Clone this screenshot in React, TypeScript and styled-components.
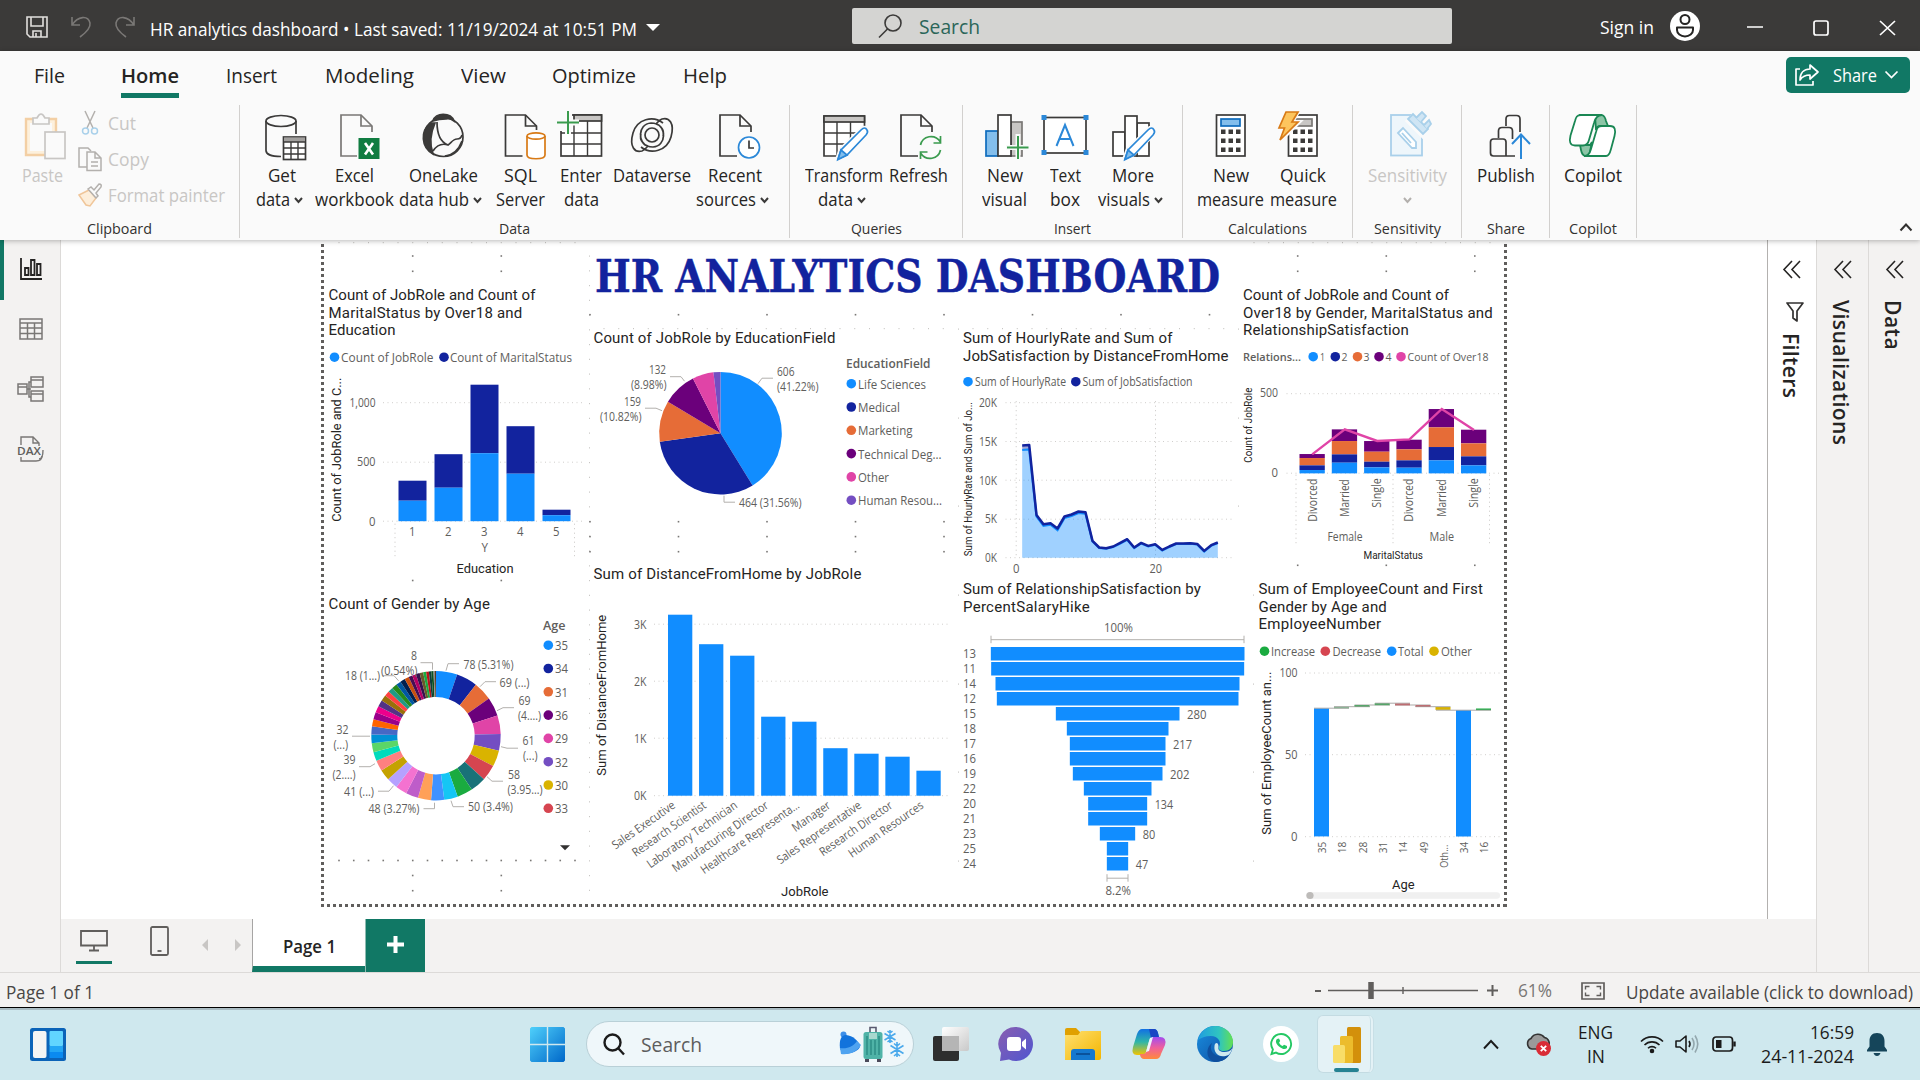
import React, { useLayoutEffect, useRef, useState } from 'react';
import styled, { createGlobalStyle, css } from 'styled-components';

const UI = `'Open Sans', 'Noto Sans', sans-serif`;
const DIN = `Roboto, 'Open Sans', sans-serif`;
const GREEN = '#117865';
const INK = '#3b3a39';

const Global = createGlobalStyle`
  *, *::before, *::after { box-sizing: border-box; }
  body { margin: 0; background: #fff; font-family: ${UI}; overflow: hidden; }
`;

/* ---------- text that fills an exact width ---------- */
const FitBox = styled.span<{ $w: number }>`
  display: block;
  flex: none;
  width: ${(p) => p.$w}px;
  text-align: left;
`;
const FitInner = styled.span`
  display: inline-block;
  white-space: pre;
  transform-origin: 0 50%;
`;
function Fit({ w, children, spaced = false }: { w: number; children: string; spaced?: boolean }) {
  const ref = useRef<HTMLSpanElement>(null);
  const [natural, setNatural] = useState(0);
  useLayoutEffect(() => {
    if (ref.current) setNatural(ref.current.getBoundingClientRect().width);
  }, []);
  const style: React.CSSProperties = !natural
    ? {}
    : spaced
      ? { letterSpacing: (w - natural) / children.length }
      : { transform: `scaleX(${w / natural})` };
  return (
    <FitBox $w={w}>
      <FitInner ref={ref} style={style}>
        {children}
      </FitInner>
    </FitBox>
  );
}

/* ---------- shell ---------- */
const Screen = styled.div`
  width: 1920px;
  height: 1080px;
  display: flex;
  flex-direction: column;
  overflow: hidden;
  background: #fff;
  color: #252423;
`;
const Svg = styled.svg<{ $w: number; $h: number; $ml?: number; $mt?: number }>`
  display: block;
  flex: none;
  width: ${(p) => p.$w}px;
  height: ${(p) => p.$h}px;
  margin-left: ${(p) => p.$ml ?? 0}px;
  margin-top: ${(p) => p.$mt ?? 0}px;
  overflow: visible;
`;

/* ---------- title bar ---------- */
const TitleBar = styled.header`
  height: 51px;
  flex: none;
  display: flex;
  align-items: flex-start;
  background: #3b3a39;
  color: #fff;
  font-size: 18px;
  line-height: 24px;
`;
const DocName = styled.div`
  margin: 17px 0 0 15px;
`;
const SearchBox = styled.div`
  width: 600px;
  height: 36px;
  margin: 8px 0 0 192px;
  display: flex;
  align-items: center;
  background: #d4d4d2;
  border-radius: 2px;
  color: #2b6659;
  font-size: 20px;
`;
const SearchWord = styled.div`
  margin: 2px 0 0 17px;
`;
const SignIn = styled.div`
  margin: 15px 0 0 148px;
`;

/* ---------- ribbon ---------- */
const Ribbon = styled.div`
  height: 189px;
  flex: none;
  background: #fafafa;
  position: relative;
  z-index: 3;
  box-shadow: 0 1px 5px rgba(0, 0, 0, 0.28);
`;
const Tabs = styled.nav`
  height: 54px;
  display: flex;
  align-items: flex-start;
  font-size: 20px;
  line-height: 28px;
`;
const Tab = styled.div<{ $ml: number; $on?: boolean }>`
  margin: 11px 0 0 ${(p) => p.$ml}px;
  height: 36px;
  ${(p) => p.$on && css`font-weight: 600; border-bottom: 5px solid ${GREEN};`}
`;
const ShareButton = styled.div`
  width: 124px;
  height: 36px;
  margin: 6px 0 0 1059px;
  display: flex;
  align-items: center;
  border-radius: 5px;
  background: ${GREEN};
  color: #fff;
  font-size: 18px;
`;
const ShareWord = styled.div`
  margin-left: 14px;
`;
const Groups = styled.div`
  display: flex;
  height: 133px;
`;
const Group = styled.section<{ $w: number }>`
  width: ${(p) => p.$w}px;
  height: 133px;
  flex: none;
  display: flex;
  flex-direction: column;
  border-right: 1px solid #d2d0ce;
`;
const GroupBody = styled.div<{ $pl: number }>`
  height: 113px;
  padding: 6px 0 0 ${(p) => p.$pl}px;
  display: flex;
  align-items: flex-start;
`;
const GroupName = styled.div`
  font-size: 15px;
  line-height: 20px;
  display: flex;
  justify-content: center;
  margin-top: 1px;
  color: #323130;
`;
const BigButton = styled.div<{ $w: number; $off?: boolean }>`
  width: ${(p) => p.$w}px;
  flex: none;
  display: flex;
  flex-direction: column;
  align-items: center;
  font-size: 17.5px;
  line-height: 24px;
  color: ${(p) => (p.$off ? '#c8c6c4' : '#252423')};
`;
const BigLabel = styled.div`
  margin-top: 2px;
  display: flex;
  flex-direction: column;
  align-items: center;
`;
const LabelLine = styled.div<{ $shift?: boolean }>`
  display: flex;
  align-items: center;
  gap: 4px;
  height: 24px;
  padding-right: ${(p) => (p.$shift ? 5 : 0)}px;
`;
const ClipList = styled.div`
  margin-left: 8px;
  display: flex;
  flex-direction: column;
  gap: 12px;
`;
const ClipItem = styled.div`
  height: 24px;
  display: flex;
  align-items: center;
  gap: 6px;
  font-size: 17.5px;
  color: #c8c6c4;
`;
const Collapse = styled.div`
  margin: 118px 0 0 263px;
`;

const Chev = ({ c = INK, s = 2 }: { c?: string; s?: number }) => (
  <Svg $w={9} $h={7} $mt={3} viewBox="0 0 9 7" fill="none" stroke={c} strokeWidth={s}>
    <path d="M1 1l3.5 4L8 1" />
  </Svg>
);

type Line = [string, number, boolean?];
function Big({ w, icon, lines, off }: { w: number; icon: React.ReactNode; lines: Line[]; off?: boolean }) {
  return (
    <BigButton $w={w} $off={off}>
      <Svg $w={50} $h={50} viewBox="0 0 50 50" fill="none" stroke={INK} strokeWidth={1.7}>
        {icon}
      </Svg>
      <BigLabel>
        {lines.map(([t, lw, chev], i) => (
          <LabelLine key={i} $shift={!!t && !!chev}>
            {t && <Fit w={lw}>{t}</Fit>}
            {chev && <Chev c={off ? '#b3b0ad' : INK} />}
          </LabelLine>
        ))}
      </BigLabel>
    </BigButton>
  );
}

const Page = ({ x, grey }: { x: number; grey?: boolean }) => (
  <g stroke={grey ? '#797775' : INK}>
    <path d={`M${x + 19} 45.5H${x}V4h20l11 11v9`} fill="#fafafa" stroke="none" />
    <path d={`M${x + 17} 45H${x}V4h20l11 11v6`} />
    <path d={`M${x + 20} 4v11h11`} />
  </g>
);
const Pencil = ({ dx = 0 }: { dx?: number }) => (
  <g transform={`translate(${dx} 0)`}>
    <path d="M44 17.5q4-1 4.500 4L27 43l-8.500 5.500L22 39z" fill="#fff" stroke="#fafafa" strokeWidth={5} />
    <path d="M42 19q4-4 6 0 1.500 2-1 5L28 44l-9 4 3-9z" fill="#fff" stroke="#2b88d8" />
    <path d="M22 39l6 5-9 4.500z" fill="#83beec" stroke="#2b88d8" />
  </g>
);
const Calc = ({ grey }: { grey?: boolean }) => (
  <g>
    <rect x={10.5} y={4} width={28.5} height={41} fill="#fff" />
    <rect x={15} y={8} width={19} height={7} fill={grey ? '#c8c6c4' : '#83beec'} stroke={grey ? '#797775' : '#0f6cbd'} />
    {[20, 29, 38].map((y) =>
      [15, 22.5, 30].map((x) => <rect key={`${x}${y}`} x={x} y={y - 1.5} width={4.5} height={4.5} fill={INK} stroke="none" />),
    )}
  </g>
);

const icons = {
  getData: (
    <>
      <path d="M24 45.5C14 45.5 9 43 9 39.500V10" />
      <path d="M39 10v13" />
      <ellipse cx={24} cy={10} rx={15} ry={5.5} />
      <rect x={26.5} y={26} width={22} height={22.5} fill="#fff" />
      <rect x={27} y={26.5} width={21} height={4.5} fill="#a19f9d" stroke="none" />
      <path d="M26.5 31h22M26.5 37h22M26.5 43h22M34 31v17.500M41 31v17.500" strokeWidth={1.4} />
    </>
  ),
  excel: (
    <>
      <Page x={11} grey />
      <rect x={27} y={25.5} width={24} height={24} fill="#fafafa" stroke="none" />
      <rect x={28.5} y={27} width={21} height={21} fill="#107c41" stroke="none" />
      <path d="M35 32l8 11.500M43 32l-8 11.500" stroke="#fff" strokeWidth={2.6} />
    </>
  ),
  onelake: (
    <>
      <circle cx={25.5} cy={26} r={19.5} />
      <path d="M15 10C17 1 33 1 36 10q-4-3-8-2-7 0-13 2z" fill={INK} />
      <path d="M13 12C2 20 3 36 15 43 11 32 13 21 17 12z" fill={INK} />
      <path d="M19 11c0 12 3 20 11 23 3-2 5-6 9-6q4 0 5-4M15 40c4-6 9-8 15-6M44 30c-3 8-8 14-17 15" />
    </>
  ),
  sql: (
    <>
      <Page x={9.5} />
      <rect x={28.5} y={19} width={23} height={31} fill="#fafafa" stroke="none" />
      <g stroke="#d87a16" fill="#fff">
        <path d="M31 25v19c0 5 18 5 18 0V25" />
        <ellipse cx={40} cy={25} rx={9} ry={3.2} />
      </g>
    </>
  ),
  enter: (
    <>
      <rect x={5} y={4} width={40.5} height={41} fill="#fff" />
      <rect x={18} y={4} width={27.5} height={6} fill="#c8c6c4" />
      <path d="M5 22h40M5 33h40M18 10v35M31.5 10v35" strokeWidth={1.4} />
      <rect x={0} y={0} width={16} height={20} fill="#fafafa" stroke="none" />
      <path d="M12 0v23M1 11.500h22" stroke="#fafafa" strokeWidth={6} />
      <path d="M12 0v23M1 11.500h22" stroke="#3a9b4e" strokeWidth={2} />
    </>
  ),
  dataverse: (
    <>
      <circle cx={25} cy={24} r={7} />
      <path d="M36 12C26 4 10 8 6 22c-4 14 2 20 9 18 3-1 4-3 6-5M14 36c10 8 26 4 30-10 4-14-2-20-9-18-3 1-4 3-6 5" />
      <path d="M29 13C39 15 40 35 26 36c-9 0-14-7-12-13M21 35C11 33 10 13 24 12c9 0 14 7 12 13" />
    </>
  ),
  recent: (
    <>
      <Page x={10} />
      <circle cx={39} cy={36.5} r={13} fill="#fafafa" stroke="none" />
      <circle cx={39} cy={36.5} r={10.5} fill="#fff" stroke="#2b88d8" />
      <path d="M39 29.5v7.500h5" stroke={INK} />
    </>
  ),
  transform: (
    <>
      <path d="M45.5 18V5H5v40h20" fill="#fff" />
      <rect x={5} y={5} width={40.5} height={6} fill="#c8c6c4" />
      <path d="M5 22h34M5 33h22M18 11v34M31.5 11v20" strokeWidth={1.4} />
      <Pencil />
    </>
  ),
  refresh: (
    <>
      <Page x={8} />
      <circle cx={37.5} cy={36.5} r={13} fill="#fafafa" stroke="none" />
      <g stroke="#3a9b4e">
        <path d="M27.5 34c2-9 14-12 20-3M47.5 25v7h-7M47.5 39c-2 9-14 12-20 3M27.5 48v-7h7" />
      </g>
    </>
  ),
  newVisual: (
    <>
      <rect x={31} y={11} width={11} height={34} fill="#c8c6c4" stroke="#797775" />
      <rect x={6} y={20} width={12} height={25} fill="#83beec" stroke="#0f6cbd" />
      <rect x={18} y={4} width={13} height={41} fill="#fff" />
      <path d="M38 23v25M26 36.500h23" stroke="#fafafa" strokeWidth={5} />
      <path d="M38 25v23M27 36.500h21.500" stroke="#3a9b4e" strokeWidth={2} />
    </>
  ),
  textBox: (
    <>
      <rect x={4} y={6.5} width={42} height={35.5} fill="#fff" />
      <g fill="#2b88d8" stroke="none">
        <rect x={1.5} y={4} width={5} height={5} />
        <rect x={43.5} y={4} width={5} height={5} />
        <rect x={1.5} y={39} width={5} height={5} />
        <rect x={43.5} y={39} width={5} height={5} />
      </g>
      <path d="M16.5 35L25 14l8.500 21M19.5 28h11" stroke="#2b88d8" strokeWidth={2} />
    </>
  ),
  moreVisuals: (
    <>
      <rect x={29} y={12} width={12} height={33} fill="#fff" />
      <rect x={5} y={21} width={12} height={24} fill="#fff" />
      <rect x={17} y={5} width={12} height={40} fill="#fff" />
      <Pencil dx={-2} />
    </>
  ),
  quick: (
    <>
      <Calc grey />
      <path d="M8 1h12l-6 10h7L2 30l4.500-13H0z" fill="#fafafa" stroke="#fafafa" strokeWidth={4} />
      <path d="M8 1h12l-6 10h6L2 29l4.500-12H1z" fill="#fdc55e" stroke="#d87a16" />
    </>
  ),
  sensitivity: (
    <g stroke="#a9d0ea" strokeWidth={1.8}>
      <rect x={9} y={4} width={31} height={40.5} fill="#eef6fb" />
      <path d="M27 10l6-6 15 15-6 6z" fill="#fafafa" stroke="#fafafa" strokeWidth={6} />
      <path d="M26 8l5-5 15 15-5 5z" fill="#cfe5f4" />
      <path d="M34 7l6-6 4 4-5 6M42 14l5-5 2 4-4 5" fill="#cfe5f4" />
      <path d="M16 22l5-5 13 14v6h-4z" fill="#fff" />
      <path d="M20 22l9 10" />
    </g>
  ),
  publish: (
    <>
      <path d="M25 15V8q0-3.500 3.500-3.500h7Q39 4.500 39 8v13" />
      <path d="M17.5 27V20q0-3.500 3.500-3.500h7q3.500 0 3.500 3.500v8" />
      <path d="M34 45H12.500q-3 0-3-3V31q0-3 3-3H22q3 0 3 3v14" />
      <path d="M40 48V25M31 33l9-9.500 9 9.500" stroke="#2b88d8" strokeWidth={2} />
    </>
  ),
  copilot: (
    <g stroke="#1a8754" strokeWidth={1.8} transform="translate(-1 0)">
      <path d="M28 4h7q3 1 4 6l2 5h-8q-3 0-4 4z" fill="#8cc5a6" />
      <path d="M13 34h10l2-3-3 14h-4q-3-1-4-6z" fill="#8cc5a6" />
      <path d="M12 4h23c-5 0-7 4-8 8l-5 17c-1 4-3 5.500-6 5.500H8c-5 0-6-4-4.500-10L8 10c1-4 2-6 6-6z" fill="#fff" />
      <path d="M39 45H17c4 0 6-3 7-7l5-17c1-4 2-6 6-6h8c5 0 6 4 4.500 10L44 38c-1 4-2 7-5 7z" fill="#fff" />
    </g>
  ),
};

function RibbonGroup({ w, pl, name, nameW, children }: { w: number; pl: number; name: string; nameW: number; children: React.ReactNode }) {
  return (
    <Group $w={w}>
      <GroupBody $pl={pl}>{children}</GroupBody>
      <GroupName>
        <Fit w={nameW}>{name}</Fit>
      </GroupName>
    </Group>
  );
}

/* ---------- body ---------- */
const Body = styled.main`
  height: 732px;
  flex: none;
  display: flex;
`;
const NavRail = styled.aside`
  width: 61px;
  flex: none;
  background: #f3f2f1;
  border-right: 1px solid #dcdad8;
  display: flex;
  flex-direction: column;
`;
const NavItem = styled.div<{ $on?: boolean }>`
  height: 60px;
  display: flex;
  align-items: center;
  justify-content: center;
  border-left: 4px solid ${(p) => (p.$on ? GREEN : 'transparent')};
  padding: 0 3px 2px 0;
`;
const Center = styled.div`
  width: 1755px;
  flex: none;
  display: flex;
  flex-direction: column;
`;
const Work = styled.div`
  height: 679px;
  display: flex;
`;
const Canvas = styled.div`
  width: 1706px;
  height: 679px;
  flex: none;
  position: relative;
  overflow: hidden;
  background: #fff;
`;
const FilterPane = styled.div`
  width: 49px;
  flex: none;
  border-left: 1px solid #b3b1af;
  display: flex;
  flex-direction: column;
  align-items: center;
  padding-top: 20px;
`;
const SidePane = styled.div<{ $w: number }>`
  width: ${(p) => p.$w}px;
  flex: none;
  background: #f3f2f1;
  border-left: 1px solid #dcdad8;
  display: flex;
  flex-direction: column;
  align-items: center;
  padding-top: 20px;
`;
const VText = styled.div<{ $mt: number; $sp?: number }>`
  writing-mode: vertical-rl;
  margin-top: ${(p) => p.$mt}px;
  margin-right: 3px;
  font-size: 21px;
  line-height: 26px;
  font-weight: 600;
  letter-spacing: ${(p) => p.$sp ?? 0}px;
`;
const Dbl = () => (
  <Svg $w={18} $h={19} viewBox="0 0 18 19" fill="none" stroke="#252423" strokeWidth={1.6}>
    <path d="M9 1L1 9.500 9 18M17 1L9 9.500l8 8.500" />
  </Svg>
);

/* report page */
const DotBorder = styled.div<{ $l: number; $t: number; $w: number; $h: number; $v?: boolean }>`
  position: absolute;
  left: ${(p) => p.$l}px;
  top: ${(p) => p.$t}px;
  width: ${(p) => p.$w}px;
  height: ${(p) => p.$h}px;
  background: repeating-linear-gradient(${(p) => (p.$v ? 'to bottom' : 'to right')}, #605e5c 0 3px, transparent 3px 6px);
`;
const GridLayer = styled.svg`
  position: absolute;
  left: 0;
  top: 0;
  width: 1706px;
  height: 679px;
`;
const ReportTitle = styled.h1`
  position: absolute;
  left: 534px;
  top: 11px;
  margin: 0;
  font: bold 44.5px/50px 'DejaVu Serif Condensed', 'DejaVu Serif', serif;
  color: #12239e;
  -webkit-text-stroke: 0.4px #12239e;
`;
const VisualBox = styled.article<{ $x: number; $y: number; $w: number; $h: number }>`
  position: absolute;
  left: ${(p) => p.$x - 61}px;
  top: ${(p) => p.$y - 240}px;
  width: ${(p) => p.$w}px;
  height: ${(p) => p.$h}px;
  display: flex;
  flex-direction: column;
`;
const VisualTitle = styled.div`
  flex: none;
  font-family: ${DIN};
  font-size: 15px;
  line-height: 17.5px;
  color: #252423;
`;
const Plot = styled.svg`
  display: block;
  flex: none;
  overflow: visible;
  font-family: ${UI};
  font-size: 12px;
  fill: #605e5c;
`;

function Visual({ x, y, w, h, title, children }: { x: number; y: number; w: number; h: number; title: [string, number][]; children: React.ReactNode }) {
  const used = title.length * 17.5;
  return (
    <VisualBox $x={x - 0.5} $y={y + 1} $w={w} $h={h}>
      <VisualTitle>
        {title.map(([t, tw]) => (
          <Fit key={t} w={tw} spaced>
            {t}
          </Fit>
        ))}
      </VisualTitle>
      <Plot width={w} height={h - used} viewBox={`${x} ${y + used + 1.8} ${w} ${h - used}`}>
        {children}
      </Plot>
    </VisualBox>
  );
}

type TProps = { x: number; y: number; w: number; s?: number; din?: boolean; b?: boolean; up?: boolean; children: string };
const T = ({ x, y, w, s = 12, din, b, up, children }: TProps) => (
  <text
    x={x}
    y={y}
    textLength={w}
    lengthAdjust="spacingAndGlyphs"
    fontSize={s}
    fontFamily={din ? DIN : UI}
    fill={din ? '#252423' : '#605e5c'}
    fontWeight={b ? 600 : 400}
    transform={up ? `rotate(-90 ${x} ${y})` : undefined}
  >
    {children}
  </text>
);
const Grid = ({ x1, x2, ys }: { x1: number; x2: number; ys: number[] }) => (
  <g stroke="#d0cecc" strokeWidth={1} strokeDasharray="1 3.5">
    {ys.map((y) => (
      <path key={y} d={`M${x1} ${y}H${x2}`} />
    ))}
  </g>
);
const Vert = ({ xs, y1, y2 }: { xs: number[]; y1: number; y2: number }) => (
  <g stroke="#c8c6c4" strokeWidth={1} strokeDasharray="1 3.5">
    {xs.map((x) => (
      <path key={x} d={`M${x} ${y1}V${y2}`} />
    ))}
  </g>
);
const Key = ({ x, y, c, t, tx, w, s = 12, by = 4.5 }: { x: number; y: number; c: string; t: string; tx: number; w: number; s?: number; by?: number }) => (
  <g>
    <circle cx={x} cy={y} r={4.8} fill={c} />
    <T x={tx} y={y + by} w={w} s={s}>
      {t}
    </T>
  </g>
);
const Leaders = ({ ds }: { ds: string[] }) => (
  <g fill="none" stroke="#b3b0ad" strokeWidth={1}>
    {ds.map((d) => (
      <path key={d} d={d} />
    ))}
  </g>
);

const B = '#118DFF';
const N = '#12239E';
const O = '#E66C37';
const P = '#6B007B';
const K = '#E044A7';
const V = '#744EC2';

function ring(values: number[], cx: number, cy: number, r: number, ri: number) {
  const total = values.reduce((a, v) => a + v, 0);
  let acc = 0;
  return values.map((v) => {
    const a = (acc / total) * Math.PI * 2;
    acc += v;
    const b = (acc / total) * Math.PI * 2;
    const p = (t: number, q: number) => `${(cx + q * Math.sin(t)).toFixed(2)} ${(cy - q * Math.cos(t)).toFixed(2)}`;
    const big = b - a > Math.PI ? 1 : 0;
    return `M${p(a, r)}A${r} ${r} 0 ${big} 1 ${p(b, r)}L${p(b, ri)}${ri ? `A${ri} ${ri} 0 ${big} 0 ${p(a, ri)}` : ''}Z`;
  });
}

const educationBars = [
  [398.5, 481, 501],
  [434.5, 454.5, 488],
  [470.5, 385, 453.5],
  [506.5, 426.5, 474],
  [542.5, 510, 515.5],
];
const EducationChart = () => (
  <Visual x={329} y={286} w={257} h={290} title={[['Count of JobRole and Count of', 207], ['MaritalStatus by Over18 and', 194], ['Education', 67]]}>
    <Key x={334.5} y={357.5} c={B} t="Count of JobRole" tx={341} w={92.5} />
    <Key x={444} y={357.5} c={N} t="Count of MaritalStatus" tx={450} w={122} />
    <T x={341} y={522} w={144} s={13} din up>Count of JobRole and C...</T>
    <Grid x1={383} x2={584} ys={[403, 462.5, 521.5]} />
    <T x={349.5} y={407} w={26}>1,000</T>
    <T x={357} y={466.5} w={18.5}>500</T>
    <T x={369} y={526} w={6.5}>0</T>
    {educationBars.map(([x, top, mid], i) => (
      <g key={x}>
        <rect x={x} y={top} width={28} height={mid - top} fill={N} />
        <rect x={x} y={mid} width={28} height={521.5 - mid} fill={B} />
        <T x={x + 10.5} y={536.5} w={6.5}>{String(i + 1)}</T>
      </g>
    ))}
    <Vert xs={[395, 574.5]} y1={524} y2={558} />
    <T x={481.5} y={552} w={6.5}>Y</T>
    <T x={456.5} y={573} w={57} s={13} din>Education</T>
  </Visual>
);

const fieldColors = [B, N, O, P, K, V];
const FieldPie = () => {
  const shapes = ring([606, 464, 159, 132, 82, 27], 720.5, 433.5, 61.3, 0);
  const keys: [string, number][] = [['Life Sciences', 68], ['Medical', 42], ['Marketing', 54.5], ['Technical Deg...', 83.5], ['Other', 31], ['Human Resou...', 84]];
  return (
    <Visual x={594} y={329} w={355} h={185} title={[['Count of JobRole by EducationField', 242]]}>
      {shapes.map((d, i) => (
        <path key={i} d={d} fill={fieldColors[i]} />
      ))}
      <Leaders ds={['M758 384l4-5.500h11', 'M684.5 381.5l-3.500-4.500h-11', 'M662 411l-6-2.500h-11', 'M724 496v6.500h11']} />
      <T x={777} y={376.5} w={17.5}>606</T>
      <T x={777} y={391.5} w={41.5}>(41.22%)</T>
      <T x={649} y={374.5} w={17}>132</T>
      <T x={631} y={389.5} w={35.5}>(8.98%)</T>
      <T x={624} y={406.5} w={17}>159</T>
      <T x={600} y={421.5} w={41.5}>(10.82%)</T>
      <T x={739} y={507.5} w={62.5}>464 (31.56%)</T>
      <T x={846} y={368} w={84.5} s={12.5} b>EducationField</T>
      {keys.map(([t, w], i) => (
        <Key key={t} x={851.3} y={384 + i * 23.3} c={fieldColors[i]} t={t} tx={858} w={w} s={12.5} by={5} />
      ))}
    </Visual>
  );
};

const roles: [string, number, number][] = [
  ['Sales Executive', 615, 74],
  ['Research Scientist', 644.5, 87],
  ['Laboratory Technician', 656, 107],
  ['Manufacturing Director', 717, 114],
  ['Healthcare Representa...', 722, 117],
  ['Manager', 748.5, 43.5],
  ['Sales Representative', 754, 100],
  ['Research Director', 757, 86],
  ['Human Resources', 771, 88.5],
];
const RoleChart = () => (
  <Visual x={594} y={565} w={358} h={335} title={[['Sum of DistanceFromHome by JobRole', 268]]}>
    <T x={606} y={776} w={161} s={13} din up>Sum of DistanceFromHome</T>
    <Grid x1={654} x2={951} ys={[624.5, 681.5, 738.5, 796]} />
    {['3K', '2K', '1K', '0K'].map((t, i) => (
      <T key={t} x={634} y={629 + i * 57.2} w={12.5}>{t}</T>
    ))}
    {roles.map(([t, top, w], i) => {
      const ex = 676 + 31.05 * i;
      return (
        <g key={t}>
          <rect x={668 + 31.05 * i} y={top} width={24.3} height={796 - top} fill={B} />
          <text x={ex} y={807.5} textAnchor="end" textLength={w} lengthAdjust="spacingAndGlyphs" transform={`rotate(-35 ${ex} 807.5)`}>
            {t}
          </text>
        </g>
      );
    })}
    <T x={781} y={896} w={47.5} s={13} din>JobRole</T>
  </Visual>
);

const trend = [
  [218, 619], [239, 617], [261, 827], [282, 855], [303, 852], [324, 868], [345, 832], [366, 826], [387, 817], [408, 819],
  [429, 905], [449, 925], [470, 927], [491, 922], [512, 911], [533, 900], [554, 925], [575, 911], [596, 920], [617, 915],
  [638, 932], [659, 922], [680, 913], [701, 913], [722, 912], [743, 914], [764, 935], [785, 918], [805, 910],
].map(([x, y]) => [950 + x / 3, 240 + y / 3]);
const darkLine = trend.map(([x, y]) => `${x.toFixed(1)},${y.toFixed(1)}`);
const lightLine = trend.map(([x, y], i) => `${x.toFixed(1)},${(y + (i < 2 ? 4.5 : i < 10 ? 1.5 : 0.5)).toFixed(1)}`);
const RateChart = () => (
  <Visual x={963.5} y={329} w={272} h={250} title={[['Sum of HourlyRate and Sum of', 209.5], ['JobSatisfaction by DistanceFromHome', 265.5]]}>
    <Key x={968.5} y={382.5} c={B} t="Sum of HourlyRate" tx={975.5} w={91} />
    <Key x={1076.3} y={382.5} c={N} t="Sum of JobSatisfaction" tx={1083} w={110} />
    <T x={972} y={557} w={154} s={11} din up>Sum of HourlyRate and Sum of Jo...</T>
    <Grid x1={1006} x2={1234} ys={[403.5, 442.3, 481, 520, 558.5]} />
    <Vert xs={[1016.7, 1156]} y1={402} y2={559} />
    <T x={979.5} y={407.5} w={18}>20K</T>
    <T x={979.5} y={446.5} w={18}>15K</T>
    <T x={979.5} y={485.5} w={18}>10K</T>
    <T x={985.5} y={524} w={12}>5K</T>
    <T x={985.5} y={562.5} w={12}>0K</T>
    <polygon points={`${trend[0][0]},558.5 ${lightLine.join(' ')} ${trend[28][0]},558.5`} fill={B} fillOpacity={0.4} />
    <polygon points={`${darkLine.join(' ')} ${[...lightLine].reverse().join(' ')}`} fill={N} fillOpacity={0.4} />
    <polyline points={lightLine.join(' ')} fill="none" stroke={B} strokeWidth={2.2} />
    <polyline points={darkLine.join(' ')} fill="none" stroke={N} strokeWidth={2.5} strokeLinejoin="round" />
    <T x={1013.5} y={573.5} w={6.5}>0</T>
    <T x={1150} y={573.5} w={12.5}>20</T>
  </Visual>
);

const hikes: [string, number, number, string?, number?][] = [
  ['13', 124, 885], ['11', 125, 884], ['14', 138, 870], ['12', 142, 867], ['15', 319, 690, '280', 19.5],
  ['18', 352, 657], ['17', 361, 648, '217', 19], ['16', 361, 648], ['19', 370, 639, '202', 19.5], ['22', 403, 606],
  ['20', 416, 593, '134', 18.5], ['21', 416, 593], ['23', 451, 557, '80', 12.5], ['25', 472, 536], ['24', 472, 536, '47', 12.5],
];
const HikeFunnel = () => (
  <Visual x={963.5} y={580} w={283} h={320} title={[['Sum of RelationshipSatisfaction by', 238], ['PercentSalaryHike', 127]]}>
    <T x={1104.5} y={633} w={29} s={13}>100%</T>
    <path d="M991.5 636.5v7.500M1244.5 636.5v7.500M991.5 640.5H1244.5M1107.5 875v7.500M1128.5 875v7.500M1107.5 879h21" stroke="#b3b0ad" fill="none" />
    {hikes.map(([t, a, b, v, vw], i) => (
      <g key={t}>
        <rect x={950 + a / 3} y={647.8 + 15 * i} width={(b - a) / 3} height={13.5} fill={B} />
        <T x={963.5} y={658.8 + 15 * i} w={13} s={13}>{t}</T>
        {v && <T x={950 + b / 3 + 7.5} y={660.3 + 15 * i} w={vw ?? 0} s={13}>{v}</T>}
      </g>
    ))}
    <T x={1106} y={896} w={25.5} s={13}>8.2%</T>
  </Visual>
);

const marital: [string, number, number[], number, number][] = [
  ['Divorced', 1300, [643, 655, 677, 691], 522, 43],
  ['Married', 1332.3, [569, 604, 644, 669], 517, 37.5],
  ['Single', 1364.6, [604, 636, 666, 683], 508, 29.5],
  ['Divorced', 1396.9, [600, 629, 662, 684], 522, 43],
  ['Married', 1429.2, [508, 563, 622, 662], 517, 37.5],
  ['Single', 1461.5, [570, 611, 650, 677], 508, 29.5],
];
const MaritalChart = () => (
  <Visual x={1243.5} y={286} w={256} h={280} title={[['Count of JobRole and Count of', 206], ['Over18 by Gender, MaritalStatus and', 250], ['RelationshipSatisfaction', 166]]}>
    <T x={1243.5} y={361} w={58} s={11.5} b>Relations...</T>
    <Key x={1313.7} y={357} c={B} t="1" tx={1320.5} w={5} s={11.5} />
    <Key x={1335.8} y={357} c={N} t="2" tx={1342} w={6} s={11.5} />
    <Key x={1358} y={357} c={O} t="3" tx={1364} w={6} s={11.5} />
    <Key x={1379.5} y={357} c={P} t="4" tx={1386} w={6} s={11.5} />
    <Key x={1401.5} y={357} c={K} t="Count of Over18" tx={1408} w={81} s={11.5} />
    <T x={1252} y={463} w={75} s={11} din up>Count of JobRole</T>
    <Grid x1={1287} x2={1500} ys={[394, 473.5]} />
    <T x={1260.5} y={397.5} w={18}>500</T>
    <T x={1272} y={477.5} w={6.5}>0</T>
    {marital.map(([t, x, tops, y, w], i) => (
      <g key={i}>
        {tops.map((z, j) => {
          const end = j < 3 ? tops[j + 1] : 701;
          return <rect key={j} x={x} y={240 + z / 3} width={25.3} height={(end - z) / 3} fill={[P, O, N, B][j]} />;
        })}
        <T x={x + 17} y={y} w={w} up>{t}</T>
      </g>
    ))}
    <polyline points="1312.7,454.7 1345.3,429.7 1377.7,441.3 1410,439.7 1442.3,409.3 1474.5,430.3" fill="none" stroke={K} strokeWidth={2.4} />
    <Vert xs={[1296.5, 1393.5, 1490]} y1={475} y2={547} />
    <T x={1328} y={541} w={35}>Female</T>
    <T x={1430} y={541} w={24.5}>Male</T>
    <T x={1364} y={559} w={59.5} s={10.5} din>MaritalStatus</T>
  </Visual>
);

const ageCounts = [78, 77, 69, 69, 68, 61, 60, 58, 58, 57, 50, 48, 48, 46, 42, 41, 40, 39, 33, 33, 32, 30, 26, 26, 24, 24, 22, 19, 19, 19, 18, 18, 16, 14, 14, 14, 13, 11, 10, 9, 8, 5, 4];
const ageColors = [
  B, N, O, P, K, V, '#D9B300', '#D64550', '#197278', '#1AAB40', '#15C6F4', '#4092FF', '#FFA058', '#BE5DC9', '#F472D0', '#B5A1FF',
  '#C4A200', '#FF8080', '#00DBBC', '#5BD667', '#0091D5', '#4668C5', '#FF6300', '#99008A', '#EC008C', '#533285', '#99700A', '#FF4141',
  '#1F9A85', '#25891C', '#0057A2', '#002050', '#C94F0F', '#450F54', '#B60064', '#34124F', '#6A5A29', '#1AAB40', '#BA141A', '#0C3D37',
  '#0B511F', '#8a8886', '#5c3a21',
];
const ageLabels: [number, number, number, string][] = [
  [463.5, 669, 50, '78 (5.31%)'], [499.5, 687, 30, '69 (...)'], [518.5, 705, 12, '69'], [518, 720, 23, '(4....)'],
  [522.5, 745, 12, '61'], [523, 760, 14.5, '(...)'], [508, 779, 12, '58'], [507.5, 794, 35, '(3.95...)'],
  [468, 811.5, 45, '50 (3.4%)'], [368.5, 813, 51, '48 (3.27%)'], [344, 796, 30, '41 (...)'], [343.5, 764, 12, '39'],
  [332.5, 779, 23, '(2....)'], [336.5, 734, 12, '32'], [333.5, 749.5, 14.5, '(...)'], [345, 680.5, 35, '18 (1...)'],
  [381, 675.5, 36.5, '(0.54%)'], [411, 660.5, 6, '8'],
];
const AgeDonut = () => (
  <Visual x={329} y={595} w={255} h={258} title={[['Count of Gender by Age', 161.5]]}>
    {ring(ageCounts, 436, 736, 64.7, 38.7).map((d, i) => (
      <path key={i} d={d} fill={ageColors[i]} />
    ))}
    <Leaders
      ds={[
        'M446 671l2-7h11', 'M480 687l5-5h11', 'M497 711l6-3h11', 'M501 747l6 1.500h11', 'M487 777l5 4.500h11', 'M451 801l2 6h11',
        'M434.5 803v6h-11', 'M393.5 786l-4.500 5.500h-11', 'M375 764l-5 3h-11', 'M370 736.5h-18', 'M398.5 681l-4.500-5h-11', 'M432.5 670v-7h-12',
      ]}
    />
    {ageLabels.map(([x, y, w, t], i) => (
      <T key={i} x={x} y={y} w={w}>{t}</T>
    ))}
    <T x={543} y={630.5} w={22.5} s={13} b>Age</T>
    {['35', '34', '31', '36', '29', '32', '30', '33'].map((t, i) => (
      <Key key={t} x={548.3} y={645.5 + 23.3 * i} c={ageColors[i]} t={t} tx={555} w={13} s={13} by={5} />
    ))}
    <path d="M560 845.5h10l-5 5z" fill="#323130" />
  </Visual>
);

const steps: [number, number, number, string][] = [
  [1334, 707, 1.7, '#7fbf92'], [1354.5, 705.3, 2, '#1AAB40'], [1374.7, 703.5, 2, '#1AAB40'], [1395, 703.7, 2, '#D64550'],
  [1415.5, 705.3, 2, '#D64550'], [1435.5, 707.3, 2.9, '#D9B300'], [1476, 708.8, 1.7, '#1AAB40'],
];
const WaterfallChart = () => (
  <Visual x={1259} y={580} w={242} h={320} title={[['Sum of EmployeeCount and First', 224.5], ['Gender by Age and', 128.5], ['EmployeeNumber', 123]]}>
    <Key x={1264.5} y={651.5} c="#1AAB40" t="Increase" tx={1271} w={44} s={12.5} />
    <Key x={1325.3} y={651.5} c="#D64550" t="Decrease" tx={1332.5} w={48.5} s={12.5} />
    <Key x={1391.7} y={651.5} c={B} t="Total" tx={1398} w={25.5} s={12.5} />
    <Key x={1434} y={651.5} c="#D9B300" t="Other" tx={1441} w={31} s={12.5} />
    <T x={1271} y={835} w={163} s={13} din up>Sum of EmployeeCount an...</T>
    <Grid x1={1305} x2={1500} ys={[673.3, 755, 837]} />
    <T x={1279.5} y={677.5} w={18}>100</T>
    <T x={1285} y={759.5} w={12.5}>50</T>
    <T x={1291} y={841.5} w={6.5}>0</T>
    <rect x={1314} y={708.7} width={15} height={128} fill={B} />
    <rect x={1456} y={710.5} width={15} height={126.3} fill={B} />
    {steps.map(([x, y, h, c]) => (
      <rect key={x} x={x} y={y} width={15} height={h} fill={c} />
    ))}
    <path d="M1314 708.5h35M1334 707h36M1354.5 705.3h35.500M1375 703.5h35M1395 705.3h35.500M1415.5 707h35M1436 710.5h55" stroke="#a19f9d" strokeWidth={0.9} fill="none" />
    {['35', '18', '28', '31', '14', '49', 'Oth...', '34', '16'].map((t, i) => (
      <T key={i} x={1326 + 20.3 * i} y={i === 6 ? 868 : 853.5} w={i === 6 ? 23 : 11.5} s={11.5} up>{t}</T>
    ))}
    <T x={1392} y={889} w={22.5} s={13} din>Age</T>
    <rect x={1306} y={892.5} width={194} height={6.5} rx={3.2} fill="#f0f0f0" />
    <circle cx={1310} cy={895.8} r={3.6} fill="#bdbbb9" />
  </Visual>
);

const range = (a: number, b: number, s: number) => Array.from({ length: Math.floor((b - a) / s) + 1 }, (_, i) => a + i * s);
const dark: number[][] = [
  ...[256, 271.3, 580.5, 875.5, 890.7].flatMap((y) => [412.7, 501.3].map((x) => [x, y])),
  ...[256, 271.3, 565.3].flatMap((y) => [1297.7, 1386.3, 1474.8].map((x) => [x, y])),
  ...range(590, 1210, 88.5).map((x) => [x, 314.7]),
  ...[521.7, 536.6, 551.7].flatMap((y) => range(590, 945, 88.5).map((x) => [x, y])),
  ...range(339, 580, 14.75).map((x) => [x, 860.5]),
];
const light: number[][] = [
  ...range(256, 900, 14.75).map((y) => [589.5, y]),
  ...range(339, 589, 14.75).map((x) => [x, 242.5]),
  ...range(1254, 1492, 14.75).map((x) => [x, 242.5]),
  ...range(604, 945, 14.75).map((x) => [x, 328.5]),
  ...range(973, 1238, 14.75).map((x) => [x, 328.5]),
  ...[329, 418, 506].flatMap((y) => [[958.5, y], [1238.5, y]]),
  ...[595, 684, 772, 861].flatMap((y) => [[958.5, y], [1253.5, y]]),
];

/* ---------- page tabs and status ---------- */
const PageBar = styled.div`
  height: 53px;
  display: flex;
  background: #f3f2f1;
`;
const ViewToggle = styled.div<{ $on?: boolean; $w: number; $ml: number }>`
  width: ${(p) => p.$w}px;
  height: 45px;
  margin-left: ${(p) => p.$ml}px;
  display: flex;
  justify-content: center;
  ${(p) => p.$on && css`border-bottom: 3px solid ${GREEN};`}
`;
const PageTab = styled.div`
  width: 113px;
  height: 53px;
  margin-left: 11px;
  padding: 15px 0 0 30px;
  background: #fff;
  border-bottom: 6px solid ${GREEN};
  border-left: 1px solid #a6a5a4;
  font-size: 17.5px;
  line-height: 24px;
  font-weight: 600;
`;
const AddPage = styled.div`
  width: 60px;
  height: 53px;
  background: ${GREEN};
  border-left: 1px solid #8fbcb2;
  display: flex;
  align-items: center;
  justify-content: center;
`;
const Status = styled.footer`
  height: 35px;
  flex: none;
  display: flex;
  align-items: center;
  background: #f3f2f1;
  border-top: 1px solid #dcdad8;
  font-size: 18px;
  line-height: 24px;
  color: #484644;
`;
const StatusText = styled.div<{ $ml: number; $mt?: number; $c?: string }>`
  margin-left: ${(p) => p.$ml}px;
  margin-top: ${(p) => p.$mt ?? 3}px;
  ${(p) => p.$c && css`color: ${p.$c};`}
`;

/* ---------- task bar ---------- */
const TaskBar = styled.div`
  height: 73px;
  flex: none;
  display: flex;
  align-items: center;
  border-top: 1px solid #000;
  box-shadow: inset 0 2px 0 #a9bcc3;
  background: #cfe8ee;
  font-size: 18px;
  line-height: 24px;
  color: #1b1b1b;
`;
const TaskSearch = styled.div`
  width: 328px;
  height: 46px;
  margin-left: 21px;
  display: flex;
  align-items: center;
  border-radius: 23px;
  border: 1px solid #b9d0d7;
  background: #eff7fa;
  color: #5d5d5d;
  font-size: 20px;
`;
const TaskWord = styled.div`
  margin: 1px 0 0 16px;
`;
const ActiveApp = styled.div`
  width: 57px;
  height: 58px;
  margin-left: 18px;
  padding: 11px 0 0 15px;
  border-radius: 6px;
  background: #e4f2f6;
  border: 1px solid #c3dbe2;
  border-right: 4px double #c8dfe6;
  display: flex;
  flex-direction: column;
`;
const ActiveMark = styled.div`
  width: 25px;
  height: 5px;
  margin: 5px 0 0 1px;
  border-radius: 3px;
  background: #258292;
`;
const TwoLines = styled.div<{ $ml: number; $end?: boolean }>`
  margin-left: ${(p) => p.$ml}px;
  display: flex;
  flex-direction: column;
  align-items: ${(p) => (p.$end ? 'flex-end' : 'center')};
`;

export default function App() {
  return (
    <Screen>
      <Global />
      <TitleBar>
        <Svg $w={22} $h={22} $ml={26} $mt={16} viewBox="0 0 22 22" fill="none" stroke="#e1dfdd" strokeWidth={1.6}>
          <path d="M1 1h20v20H4l-3-3zM5 1v9h12V1M7 21v-6h8v6M10 17v4" />
        </Svg>
        <Svg $w={20} $h={22} $ml={23} $mt={16} viewBox="0 0 20 22" fill="none" stroke="#7a7876" strokeWidth={1.6}>
          <path d="M1 1v8h8M1 9C7 0 17-1 19 7q1 6-10 14" />
        </Svg>
        <Svg $w={20} $h={22} $ml={24} $mt={16} viewBox="0 0 20 22" fill="none" stroke="#7a7876" strokeWidth={1.6}>
          <path d="M19 1v8h-8M19 9C13 0 3-1 1 7q-1 6 10 14" />
        </Svg>
        <DocName>
          <Fit w={487}>HR analytics dashboard • Last saved: 11/19/2024 at 10:51 PM</Fit>
        </DocName>
        <Svg $w={14} $h={7} $ml={9} $mt={24} viewBox="0 0 14 7">
          <path d="M0 0h14L7 7z" fill="#fff" />
        </Svg>
        <SearchBox>
          <Svg $w={24} $h={24} $ml={26} $mt={-1} viewBox="0 0 24 24" fill="none" stroke="#3b3a39" strokeWidth={1.6}>
            <circle cx={15} cy={9} r={8} />
            <path d="M9.5 15L1 23.500" />
          </Svg>
          <SearchWord>
            <Fit w={61}>Search</Fit>
          </SearchWord>
        </SearchBox>
        <SignIn>
          <Fit w={54}>Sign in</Fit>
        </SignIn>
        <Svg $w={30} $h={30} $ml={16} $mt={11} viewBox="0 0 30 30">
          <circle cx={15} cy={15} r={15} fill="#fff" />
          <circle cx={15} cy={8.5} r={4.5} fill="none" stroke="#252423" strokeWidth={2} />
          <path d="M7 16.5h16v2.500a8 6.5 0 01-16 0z" fill="none" stroke="#252423" strokeWidth={2} strokeLinejoin="round" />
        </Svg>
        <Svg $w={149} $h={16} $ml={47} $mt={20} viewBox="0 0 149 16" fill="none" stroke="#fff" strokeWidth={1.7}>
          <path d="M0 7h16M133 1l15 14M148 1l-15 14" />
          <rect x={67} y={1} width={14} height={14} rx={2} />
        </Svg>
      </TitleBar>

      <Ribbon>
        <Tabs>
          <Tab $ml={34}><Fit w={31}>File</Fit></Tab>
          <Tab $ml={56} $on><Fit w={58}>Home</Fit></Tab>
          <Tab $ml={47}><Fit w={51}>Insert</Fit></Tab>
          <Tab $ml={48}><Fit w={89}>Modeling</Fit></Tab>
          <Tab $ml={47}><Fit w={45}>View</Fit></Tab>
          <Tab $ml={46}><Fit w={84}>Optimize</Fit></Tab>
          <Tab $ml={47}><Fit w={44}>Help</Fit></Tab>
          <ShareButton>
            <Svg $w={24} $h={22} $ml={9} viewBox="0 0 24 22" fill="none" stroke="#fff" strokeWidth={1.7}>
              <path d="M5 5H1v16h17v-4M15 1l8 7-8 7v-4c-5 0-8 2-10 5 0-7 4-11 10-11z" strokeLinejoin="round" />
            </Svg>
            <ShareWord><Fit w={44}>Share</Fit></ShareWord>
            <Svg $w={13} $h={8} $ml={8} viewBox="0 0 13 8" fill="none" stroke="#fff" strokeWidth={1.7}>
              <path d="M.5.5l6 6 6-6" />
            </Svg>
          </ShareButton>
        </Tabs>
        <Groups>
          <RibbonGroup w={240} pl={14} name="Clipboard" nameW={65}>
            <BigButton $w={56} $off>
              <Svg $w={50} $h={50} $ml={8} viewBox="0 0 50 50" fill="none" stroke="#c8c6c4" strokeWidth={1.7}>
                <path d="M5 8h30v36H5z" fill="#fdf0dc" stroke="#f3cfa4" strokeWidth={2.4} />
                <rect x={9} y={12} width={22} height={28} fill="#fafafa" stroke="none" />
                <path d="M12 13V7h4q4-8 8 0h4v6z" fill="#fafafa" />
                <rect x={24} y={21} width={20} height={26.5} fill="#fafafa" />
              </Svg>
              <BigLabel><LabelLine><Fit w={41}>Paste</Fit></LabelLine></BigLabel>
            </BigButton>
            <ClipList>
              <ClipItem>
                <Svg $w={24} $h={24} viewBox="0 0 24 24" fill="none" stroke="#b3b0ad" strokeWidth={1.5}>
                  <path d="M7 0l8 17M17 0L9 17" />
                  <g stroke="#a9d0ea"><circle cx={7.5} cy={20} r={3} /><circle cx={16.5} cy={20} r={3} /></g>
                </Svg>
                <Fit w={28}>Cut</Fit>
              </ClipItem>
              <ClipItem>
                <Svg $w={24} $h={24} viewBox="0 0 24 24" fill="none" stroke="#b3b0ad" strokeWidth={1.5}>
                  <path d="M9 20H1V1h9l3 3" />
                  <path d="M9 5h8l6 6v12.500H9zM17 5v6h6M13 15h7M13 19h7" fill="#fafafa" />
                </Svg>
                <Fit w={41}>Copy</Fit>
              </ClipItem>
              <ClipItem>
                <Svg $w={24} $h={24} viewBox="0 0 24 24" fill="none" stroke="#b3b0ad" strokeWidth={1.5}>
                  <path d="M1 12l10-5 7 8-6 8-4-1z" fill="#fdeeda" stroke="#f0c69a" />
                  <path d="M10 6l3-2 3 3 5-6q3 0 2 3l-5 6 2 3-2 2z" fill="#fafafa" />
                </Svg>
                <Fit w={117}>Format painter</Fit>
              </ClipItem>
            </ClipList>
          </RibbonGroup>
          <RibbonGroup w={550} pl={11} name="Data" nameW={31}>
            <Big w={62} icon={icons.getData} lines={[['Get', 28], ['data', 34, true]]} />
            <Big w={83} icon={icons.excel} lines={[['Excel', 39], ['workbook', 79]]} />
            <Big w={94} icon={icons.onelake} lines={[['OneLake', 69], ['data hub', 70, true]]} />
            <Big w={61} icon={icons.sql} lines={[['SQL', 33], ['Server', 49]]} />
            <Big w={60} icon={icons.enter} lines={[['Enter', 42], ['data', 35]]} />
            <Big w={82} icon={icons.dataverse} lines={[['Dataverse', 78]]} />
            <Big w={84} icon={icons.recent} lines={[['Recent', 54], ['sources', 60, true]]} />
          </RibbonGroup>
          <RibbonGroup w={173} pl={13} name="Queries" nameW={51}>
            <Big w={82} icon={icons.transform} lines={[['Transform', 78], ['data', 35, true]]} />
            <Big w={66} icon={icons.refresh} lines={[['Refresh', 59]]} />
          </RibbonGroup>
          <RibbonGroup w={220} pl={12} name="Insert" nameW={37}>
            <Big w={59} icon={icons.newVisual} lines={[['New', 36], ['visual', 45]]} />
            <Big w={62} icon={icons.textBox} lines={[['Text', 31], ['box', 30]]} />
            <Big w={74} icon={icons.moreVisuals} lines={[['More', 42], ['visuals', 52, true]]} />
          </RibbonGroup>
          <RibbonGroup w={170} pl={11} name="Calculations" nameW={79}>
            <Big w={73} icon={<Calc />} lines={[['New', 36], ['measure', 67]]} />
            <Big w={72} icon={icons.quick} lines={[['Quick', 46], ['measure', 67]]} />
          </RibbonGroup>
          <RibbonGroup w={109} pl={0} name="Sensitivity" nameW={67}>
            <Big w={108} off icon={icons.sensitivity} lines={[['Sensitivity', 79], ['', 0, true]]} />
          </RibbonGroup>
          <RibbonGroup w={88} pl={0} name="Share" nameW={38}>
            <Big w={88} icon={icons.publish} lines={[['Publish', 58]]} />
          </RibbonGroup>
          <RibbonGroup w={87} pl={0} name="Copilot" nameW={48}>
            <Big w={86} icon={icons.copilot} lines={[['Copilot', 58]]} />
          </RibbonGroup>
          <Collapse>
            <Svg $w={12} $h={8} viewBox="0 0 12 8" fill="none" stroke="#323130" strokeWidth={2}>
              <path d="M.5 7.500L6 1.500l5.500 6" />
            </Svg>
          </Collapse>
        </Groups>
      </Ribbon>

      <Body>
        <NavRail>
          <NavItem $on>
            <Svg $w={22} $h={22} viewBox="0 0 22 22" fill="none" stroke="#252423" strokeWidth={1.8}>
              <path d="M1 0v21h21M5 10h3.500v7H5zM11 2h3.500v15H11zM17 6h3.500v11H17z" />
            </Svg>
          </NavItem>
          <NavItem>
            <Svg $w={24} $h={22} viewBox="0 0 24 22" fill="none" stroke="#797775" strokeWidth={1.5}>
              <path d="M1 1h22v20H1zM1 5h22M1 10h22M1 15.500h22M8.5 5v16M15.5 5v16" />
            </Svg>
          </NavItem>
          <NavItem>
            <Svg $w={28} $h={26} viewBox="0 0 28 26" fill="none" stroke="#797775" strokeWidth={1.5}>
              <path d="M14 1h12v10H14zM14 4h12M1 8h9v10H1zM1 11h9M14 15h12v10H14zM14 18h12M10 13h4M12 13V6h2M12 13v8h2" />
            </Svg>
          </NavItem>
          <NavItem>
            <Svg $w={28} $h={26} viewBox="0 0 28 26" fill="none" stroke="#797775" strokeWidth={1.4}>
              <path d="M4 9V1h12l6 6v3M16 1v6h6M4 21v4h15c4 0 6-2 6-5" />
              <text x={0} y={19} fontSize={11} textLength={24} lengthAdjust="spacingAndGlyphs" fill="#605e5c" stroke="none" fontWeight={600}>DAX</text>
              <path d="M22 23q4 0 4-9" />
            </Svg>
          </NavItem>
        </NavRail>
        <Center>
          <Work>
            <Canvas>
              <GridLayer viewBox="61 240 1706 679">
                {light.map(([x, y], i) => <rect key={i} x={x - 0.5} y={y - 0.5} width={1} height={1.2} fill="#c8c6c4" />)}
                {dark.map(([x, y], i) => <rect key={i} x={x - 0.8} y={y - 0.8} width={1.6} height={1.6} fill="#797775" />)}
              </GridLayer>
              <DotBorder $l={260} $t={4} $w={3} $h={663} $v />
              <DotBorder $l={1443} $t={4} $w={3} $h={663} $v />
              <DotBorder $l={260} $t={664} $w={1186} $h={3} />
              <ReportTitle><Fit w={625}>HR ANALYTICS DASHBOARD</Fit></ReportTitle>
              <EducationChart />
              <FieldPie />
              <RateChart />
              <MaritalChart />
              <AgeDonut />
              <RoleChart />
              <HikeFunnel />
              <WaterfallChart />
            </Canvas>
            <FilterPane>
              <Dbl />
              <Svg $w={18} $h={20} $ml={5} $mt={23} viewBox="0 0 18 20" fill="none" stroke="#323130" strokeWidth={1.7}>
                <path d="M1 1h16l-6 8v10l-4-3V9z" strokeLinejoin="round" />
              </Svg>
              <VText $mt={11} $sp={0.4}>Filters</VText>
            </FilterPane>
          </Work>
          <PageBar>
            <ViewToggle $on $w={36} $ml={15}>
              <Svg $w={28} $h={22} $mt={11} viewBox="0 0 28 22" fill="none" stroke="#605e5c" strokeWidth={1.8}>
                <path d="M1 1h26v14.500H1zM14 15.5V20M9 20.5h10" />
              </Svg>
            </ViewToggle>
            <ViewToggle $w={19} $ml={38}>
              <Svg $w={19} $h={30} $mt={7} viewBox="0 0 19 30" fill="none" stroke="#605e5c" strokeWidth={1.8}>
                <rect x={1} y={1} width={17} height={28} rx={1.5} />
                <path d="M7.5 25h4" />
              </Svg>
            </ViewToggle>
            <Svg $w={40} $h={12} $ml={32} $mt={20} viewBox="0 0 40 12" fill="#c8c6c4">
              <path d="M7 0v12L1 6zM34 0v12l6-6z" />
            </Svg>
            <PageTab><Fit w={53}>Page 1</Fit></PageTab>
            <AddPage>
              <Svg $w={17} $h={17} $mt={-3} viewBox="0 0 17 17" stroke="#fff" strokeWidth={4}>
                <path d="M8.5 0v17M0 8.500h17" />
              </Svg>
            </AddPage>
          </PageBar>
        </Center>
        <SidePane $w={52}>
          <Dbl />
          <VText $mt={21} $sp={0.45}>Visualizations</VText>
        </SidePane>
        <SidePane $w={52}>
          <Dbl />
          <VText $mt={21} $sp={0.5}>Data</VText>
        </SidePane>
      </Body>

      <Status>
        <StatusText $ml={6}><Fit w={88}>Page 1 of 1</Fit></StatusText>
        <Svg $w={184} $h={18} $ml={1220} $mt={1} viewBox="0 0 184 18" stroke="#605e5c" fill="none">
          <path d="M1 9h6" strokeWidth={2} />
          <path d="M14 8.500h150M89 5v7" strokeWidth={1.4} />
          <path d="M57 0v17" strokeWidth={5.5} />
          <path d="M173 8.500h11M178.5 3v11" strokeWidth={2} />
        </Svg>
        <StatusText $ml={20} $mt={0} $c="#797775"><Fit w={34}>61%</Fit></StatusText>
        <Svg $w={24} $h={18} $ml={29} $mt={1} viewBox="0 0 24 18" stroke="#605e5c" fill="none" strokeWidth={1.7}>
          <path d="M1 1h22v16H1z" />
          <path d="M4.5 7.500V4.500h4M15.5 4.500h4v3M19.5 10.500v3h-4M8.5 13.500h-4v-3" strokeWidth={1.4} />
        </Svg>
        <StatusText $ml={21}><Fit w={287}>Update available (click to download)</Fit></StatusText>
      </Status>

      <TaskBar>
        <Svg $w={36} $h={33} $ml={30} viewBox="0 0 36 33">
          <defs>
            <linearGradient id="win" x1="0" y1="0" x2="1" y2="1"><stop offset="0" stopColor="#4fd0fb" /><stop offset="1" stopColor="#0067c9" /></linearGradient>
            <linearGradient id="tv" x1="0" y1="0" x2="1" y2="1"><stop offset="0" stopColor="#fff" /><stop offset="1" stopColor="#c9c9c9" /></linearGradient>
            <linearGradient id="chat" x1="0" y1="0" x2="1" y2="1"><stop offset="0" stopColor="#8a5fb0" /><stop offset="1" stopColor="#4f55d0" /></linearGradient>
            <linearGradient id="cpA" x1="0" y1="0" x2="0" y2="1"><stop offset="0" stopColor="#1170e4" /><stop offset=".5" stopColor="#2fb6a8" /><stop offset="1" stopColor="#f2c400" /></linearGradient>
            <linearGradient id="cpB" x1="0" y1="0" x2="0" y2="1"><stop offset="0" stopColor="#a34bf0" /><stop offset=".5" stopColor="#f0609a" /><stop offset="1" stopColor="#ff8a3c" /></linearGradient>
            <linearGradient id="edA" x1="0" y1="0" x2="1" y2="0"><stop offset="0" stopColor="#1f9de0" /><stop offset=".6" stopColor="#2fc4c0" /><stop offset="1" stopColor="#63e052" /></linearGradient>
            <linearGradient id="edB" x1="0" y1="0" x2="1" y2="1"><stop offset="0" stopColor="#1a8fe0" /><stop offset="1" stopColor="#0c4ca0" /></linearGradient>
            <linearGradient id="fold" x1="0" y1="0" x2="1" y2="1"><stop offset="0" stopColor="#ffe070" /><stop offset="1" stopColor="#f3b500" /></linearGradient>
          </defs>
          <rect width={36} height={33} rx={2.5} fill="#0b63b8" />
          <rect x={3} y={3} width={13.5} height={27} rx={2} fill="#f4f4f4" />
          <rect x={19.5} y={3} width={13.5} height={15} rx={1} fill="#61d5ff" />
          <rect x={19.5} y={18} width={13.5} height={6} fill="#22a6f5" />
          <rect x={19.5} y={24} width={13.5} height={6} fill="#0a8af0" />
        </Svg>
        <Svg $w={35} $h={35} $ml={464} viewBox="0 0 35 35" fill="url(#win)">
          <path d="M1.5 0H16.8V16.8H0V1.5zM18.2 0H33.5L35 1.5V16.8H18.2zM0 18.2H16.8V35H1.5L0 33.5zM18.2 18.2H35V33.5L33.5 35H18.2z" />
        </Svg>
        <TaskSearch>
          <Svg $w={22} $h={22} $ml={16} viewBox="0 0 22 22" fill="none" stroke="#1b1b1b" strokeWidth={2.4}>
            <circle cx={9.5} cy={9.5} r={8} />
            <path d="M15 15l6 6.500" />
          </Svg>
          <TaskWord><Fit w={61}>Search</Fit></TaskWord>
          <Svg $w={67} $h={36} $ml={137} viewBox="0 0 67 36">
            <circle cx={4.5} cy={8.5} r={3} fill="#3d8fe8" />
            <path d="M1 23C0 14 2 9 7 9c7 1 12 5 14 11 0 4-8 8-16 8z" fill="#1273dc" />
            <path d="M1 22c7 1 13-1 17-7l4 4c-4 7-12 10-20 9z" fill="#4fa3f0" />
            <path d="M31 8V1.500h6V8" fill="none" stroke="#5a5a70" strokeWidth={1.6} />
            <rect x={24.5} y={6} width={19} height={27} rx={2.5} fill="#4fb3a7" />
            <path d="M28 10v19M32 14v15M36 14v15M40 10v19" stroke="#2b8c84" strokeWidth={1.4} />
            <rect x={30} y={7} width={8} height={6} fill="#a8d8cf" />
            <rect x={26} y={33} width={4} height={3} fill="#4a4a5a" />
            <rect x={38} y={33} width={4} height={3} fill="#4a4a5a" />
            <g stroke="#4aa9ec" strokeWidth={1.6} fill="none">
              <path d="M51 4v13M45.5 7.500l11 6.500M56.5 7.500l-11 6.500M48.5 5l2.500 2 2.500-2M48.5 16l2.500-2 2.500 2" />
              <path d="M58 16v15M51.5 19.500l13 8M64.5 19.500l-13 8M55 17.500l3 2.500 3-2.500M55 30l3-2.500 3 2.500" />
            </g>
          </Svg>
        </TaskSearch>
        <Svg $w={36} $h={34} $ml={19} viewBox="0 0 36 34">
          <rect y={9} width={26} height={25} rx={2} fill="#2e2e2e" />
          <rect x={9} y={0} width={27} height={24} rx={2} fill="url(#tv)" />
          <rect x={9} y={9} width={17} height={15} fill="#b5b5b5" />
        </Svg>
        <Svg $w={34} $h={34} $ml={30} viewBox="0 0 34 34">
          <path d="M17 0a17 17 0 11-7 32.500L1 34l1-8A17 17 0 0117 0z" fill="url(#chat)" />
          <rect x={8} y={10} width={14} height={14} rx={3} fill="#fff" />
          <path d="M23 15l4-3.500v11L23 19z" fill="#fff" />
        </Svg>
        <Svg $w={36} $h={32} $ml={32} viewBox="0 0 36 32">
          <path d="M0 2q0-2 2-2h9l4 4v6H0z" fill="#e0a000" />
          <path d="M0 7h13l3-4h20v27q0 2-2 2H0z" fill="url(#fold)" />
          <path d="M6 32v-8q0-3 3-3h18q3 0 3 3v8z" fill="#1478cf" />
          <path d="M11 26h14" stroke="#0a4f96" strokeWidth={1.8} />
        </Svg>
        <Svg $w={34} $h={30} $ml={31} viewBox="0 0 34 30">
          <path d="M10 0h12q3 0 4 4l1 4h-6q-3 0-4 4l-3 11q-1 3-4 3H5q-6 0-4-8l4-13Q7 0 10 0z" fill="url(#cpA)" />
          <path d="M17 0h5q3 0 4 4l1 4h-6l-2 1z" fill="#1946c4" />
          <path d="M24 30H12q-3 0-4-4l0-1h3q3 0 4-4l3-9q1-4 4-4h6q7 0 5 8l-4 9q-1 5-5 5z" fill="url(#cpB)" />
          <path d="M18 9l-4 14 3-1 4-14z" fill="#eef3fb" />
        </Svg>
        <Svg $w={36} $h={36} $ml={31} viewBox="0 0 36 36">
          <circle cx={18} cy={18} r={18} fill="url(#edB)" />
          <path d="M1 14C4 4 11 0 18 0c11 0 18 8 18 16 0 6-4 9-9 9-4 0-6-2-5-4 3-5-1-11-8-11-6 0-10 2-13 4z" fill="url(#edA)" />
          <path d="M15 17c-4 8 3 17 17 12-3 5-9 7-14 7C9 34 8 22 15 17z" fill="#0f4f9e" />
          <path d="M21.5 21c-1 3 2 5 6 5 3 0 6-1 8-4-1 3-2 5-4 7-9 4-15-2-14-9 0-3 4-5 4 1z" fill="#cfe8ee" />
        </Svg>
        <Svg $w={36} $h={36} $ml={30} viewBox="0 0 36 36">
          <circle cx={18} cy={18} r={18} fill="#fff" />
          <path d="M18 8a10 10 0 11-5 18.600L8.5 28l1.400-4.500A10 10 0 0118 8z" fill="none" stroke="#25c864" strokeWidth={1.9} />
          <path d="M14 13c-2 2-1 5 2 7.500s6 3.500 8 1.500v-2l-3-1.300-1.300 1.300c-1.700-.7-3-2-3.600-3.600l1.100-1.400-1.200-2.500z" fill="#25c864" />
        </Svg>
        <ActiveApp>
          <Svg $w={28} $h={36} viewBox="0 0 28 36">
            <rect x={14} y={0} width={14} height={36} rx={1.5} fill="#d3900b" />
            <rect x={7} y={9} width={13} height={27} rx={1.5} fill="#ecbc2c" />
            <rect x={0} y={18} width={12} height={18} rx={1.5} fill="#f8dd68" />
          </Svg>
          <ActiveMark />
        </ActiveApp>
        <Svg $w={16} $h={9} $ml={109} viewBox="0 0 16 9" fill="none" stroke="#1b1b1b" strokeWidth={1.9}>
          <path d="M1 8.500l7-7.500 7 7.500" />
        </Svg>
        <Svg $w={25} $h={22} $ml={27} $mt={2} viewBox="0 0 25 22">
          <path d="M6 15a5.500 5.500 0 01-1-10.500 8 8 0 0113.500-1A6 6 0 0122 13l-8 2z" fill="#9a9a9a" stroke="#333" strokeWidth={1.6} />
          <circle cx={17.5} cy={14.5} r={7.5} fill="#d92c36" />
          <path d="M14.8 11.800l5.400 5.400M20.2 11.800l-5.400 5.400" stroke="#fff" strokeWidth={1.8} />
        </Svg>
        <TwoLines $ml={27}>
          <Fit w={35}>ENG</Fit>
          <Fit w={18}>IN</Fit>
        </TwoLines>
        <Svg $w={24} $h={18} $ml={27} viewBox="0 0 24 18" fill="none" stroke="#1b1b1b" strokeWidth={1.6}>
          <path d="M1 6.500a15.500 15.500 0 0122 0M4.5 10a10.600 10.600 0 0115 0M8 13.300a5.700 5.700 0 018 0" />
          <circle cx={12} cy={16} r={1.5} fill="#1b1b1b" />
        </Svg>
        <Svg $w={24} $h={20} $ml={11} viewBox="0 0 24 20" fill="none" stroke="#1b1b1b" strokeWidth={1.6}>
          <path d="M1 7h4l6-5v16l-6-5H1zM14 7q2 3 0 6" strokeLinejoin="round" />
          <path d="M17 4q4 6 0 12M20 1.500q5.500 8.500 0 17" stroke="#93a7ad" />
        </Svg>
        <Svg $w={24} $h={16} $ml={13} viewBox="0 0 24 16" fill="none" stroke="#1b1b1b" strokeWidth={1.7}>
          <rect x={1} y={1} width={19.5} height={14} rx={3} />
          <rect x={4} y={4} width={5.5} height={8} fill="#1b1b1b" stroke="none" />
          <path d="M22.5 5.500v5" strokeWidth={2.4} />
        </Svg>
        <TwoLines $ml={25} $end>
          <Fit w={44}>16:59</Fit>
          <Fit w={93}>24-11-2024</Fit>
        </TwoLines>
        <Svg $w={20} $h={23} $ml={13} viewBox="0 0 20 23" fill="#15455a">
          <path d="M10 0c5 0 7.500 3.500 7.500 8v5.500L20 17v1.500H0V17l2.500-3.500V8C2.5 3.500 5 0 10 0zM6.5 20h7q-1 3-3.500 3t-3.500-3z" />
        </Svg>
      </TaskBar>
    </Screen>
  );
}
